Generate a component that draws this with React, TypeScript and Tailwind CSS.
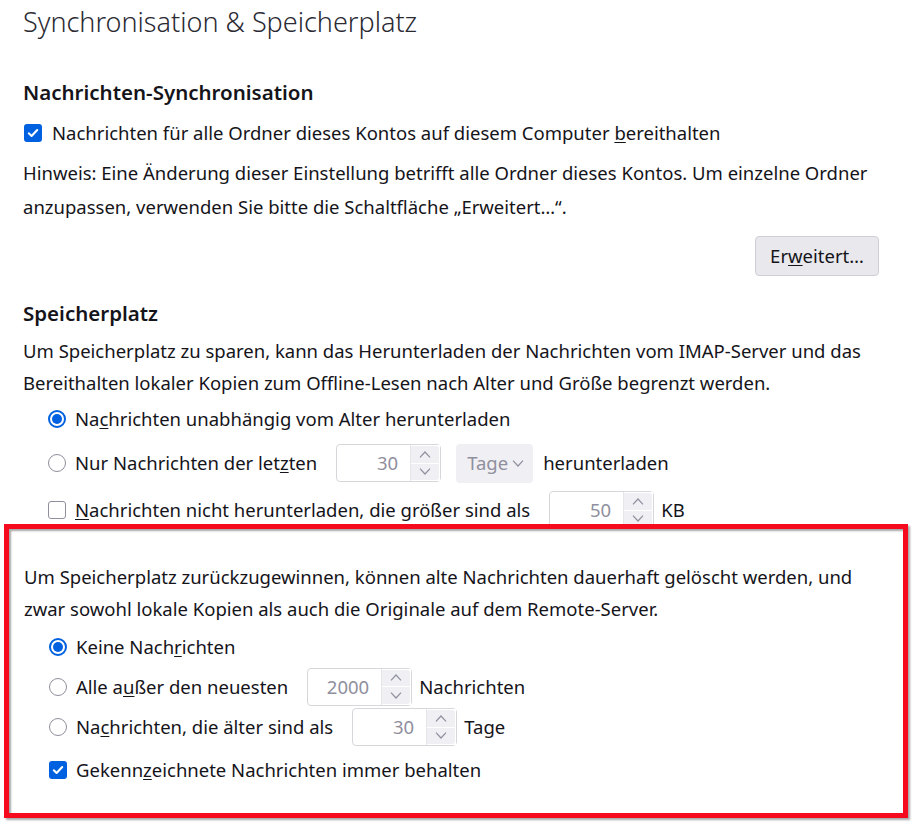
import React from "react";

const Check = ({ checked }: { checked: boolean }) =>
  checked ? (
    <span className="flex h-[18px] w-[18px] shrink-0 items-center justify-center rounded-[3px] bg-[#0061e0]">
      <svg viewBox="0 0 16 16" className="h-[14px] w-[14px]" fill="none" stroke="white" strokeWidth="2.4" strokeLinecap="round" strokeLinejoin="round">
        <path d="M3.2 8.4 6.4 11.4 12.8 4.6" />
      </svg>
    </span>
  ) : (
    <span className="h-[18px] w-[18px] shrink-0 rounded-[3px] border border-[#8f8f9d] bg-white" />
  );

const Radio = ({ checked }: { checked: boolean }) =>
  checked ? (
    <span className="flex h-[18px] w-[18px] shrink-0 items-center justify-center rounded-full border-2 border-[#0061e0] bg-white">
      <span className="h-[10px] w-[10px] rounded-full bg-[#0061e0]" />
    </span>
  ) : (
    <span className="h-[18px] w-[18px] shrink-0 rounded-full border border-[#8f8f9d] bg-white" />
  );

const Chevron = ({ up }: { up?: boolean }) => (
  <svg viewBox="0 0 12 7" className="h-[7px] w-[12px]" fill="none" stroke="#8f8f9d" strokeWidth="1.2">
    <path d={up ? "M1 6.4 6 1 11 6.4" : "M1 0.6 6 6 11 0.6"} />
  </svg>
);

const Spin = ({ value }: { value: string }) => (
  <span className="ml-[19px] mr-[7px] flex h-[38px] w-[105px] shrink-0 items-stretch rounded-[4px] border border-[#d7d7db] bg-white">
    <span className="flex flex-1 items-center justify-end pr-[12px] text-[#8f8f9d]">{value}</span>
    <span className="flex w-[30px] flex-col gap-[1px] border-l border-[#e6e6ea] bg-white py-[1px] pr-[1px]">
      <span className="flex flex-1 items-center justify-center rounded-tr-[3px] bg-[#f0f0f4]">
        <Chevron up />
      </span>
      <span className="flex flex-1 items-center justify-center rounded-br-[3px] bg-[#f0f0f4]">
        <Chevron />
      </span>
    </span>
  </span>
);

const Row = ({ children, h }: { children: React.ReactNode; h: string }) => (
  <div className={`flex items-center pl-[25px] ${h}`}>{children}</div>
);

export default function App() {
  return (
    <div
      className="h-[826px] w-[912px] overflow-hidden bg-white pl-[23px] text-[18.5px] text-[#15141a]"
      style={{ fontFamily: '"Noto Sans", "Open Sans", sans-serif' }}
    >
      <h1 className="text-[27px] font-light leading-[44px] text-[#2b2a33]">Synchronisation &amp; Speicherplatz</h1>

      <h2 className="mt-[34px] text-[20.5px] font-semibold leading-[28px]">Nachrichten-Synchronisation</h2>
      <div className="mt-[11px] flex h-[32px] items-center gap-[10px] pl-[1px]">
        <Check checked />
        <span>
          Nachrichten für alle Ordner dieses Kontos auf diesem Computer <u className="underline-offset-2">b</u>ereithalten
        </span>
      </div>
      <p className="mt-[7px] w-[870px] leading-[34px]">
        Hinweis: Eine Änderung dieser Einstellung betrifft alle Ordner dieses Kontos. Um einzelne Ordner
        <br />
        anzupassen, verwenden Sie bitte die Schaltfläche „Erweitert…“.
      </p>
      <div className="mt-[12px] flex w-[856px] justify-end">
        <button className="h-[40px] w-[124px] rounded-[4px] border border-[#cfcfd8] bg-[#e9e9ed] text-[18.5px] text-[#15141a]">
          Er<u className="underline-offset-2">w</u>eitert…
        </button>
      </div>

      <h2 className="mt-[23px] text-[20.5px] font-semibold leading-[28px]">Speicherplatz</h2>
      <p className="mt-[8px] w-[870px] leading-[32px]">
        Um Speicherplatz zu sparen, kann das Herunterladen der Nachrichten vom IMAP-Server und das
        <br />
        Bereithalten lokaler Kopien zum Offline-Lesen nach Alter und Größe begrenzt werden.
      </p>
      <Row h="h-[40px]">
        <Radio checked />
        <span className="ml-[9px]">
          Na<u className="underline-offset-2">c</u>hrichten unabhängig vom Alter herunterladen
        </span>
      </Row>
      <Row h="h-[44px] mt-[2px]">
        <Radio checked={false} />
        <span className="ml-[9px]">
          Nur Nachrichten der let<u className="underline-offset-2">z</u>ten
        </span>
        <Spin value="30" />
        <span className="ml-[8px] flex h-[39px] w-[77px] items-center gap-[4px] rounded-[4px] bg-[#f0f0f4] pl-[11px] text-[#8f8f9d]">
          Tage
          <Chevron />
        </span>
        <span className="ml-[10px]">herunterladen</span>
      </Row>
      <Row h="h-[40px] mt-[5px]">
        <Check checked={false} />
        <span className="ml-[9px]">
          <u className="underline-offset-2">N</u>achrichten nicht herunterladen, die größer sind als
        </span>
        <Spin value="50" />
        <span>KB</span>
      </Row>

      <section className="relative -ml-[19px] -mt-[6px] h-[294px] w-[904px] border-[5px] border-[#f50a1e] pl-[15px] pt-[32px] shadow-[2px_2px_2px_rgba(0,0,0,0.35),inset_2px_2px_2px_rgba(0,0,0,0.35)]">
        <p className="w-[870px] leading-[32px]">
          Um Speicherplatz zurückzugewinnen, können alte Nachrichten dauerhaft gelöscht werden, und
          <br />
          zwar sowohl lokale Kopien als auch die Originale auf dem Remote-Server.
        </p>
        <Row h="h-[40px] mt-[2px]">
          <Radio checked />
          <span className="ml-[9px]">
            Keine Nach<u className="underline-offset-2">r</u>ichten
          </span>
        </Row>
        <Row h="h-[39px]">
          <Radio checked={false} />
          <span className="ml-[9px]">
            Alle a<u className="underline-offset-2">u</u>ßer den neuesten
          </span>
          <Spin value="2000" />
          <span>Nachrichten</span>
        </Row>
        <Row h="h-[42px]">
          <Radio checked={false} />
          <span className="ml-[9px]">
            Na<u className="underline-offset-2">c</u>hrichten, die älter sind als
          </span>
          <Spin value="30" />
          <span>Tage</span>
        </Row>
        <Row h="h-[44px]">
          <Check checked />
          <span className="ml-[9px]">
            Gekenn<u className="underline-offset-2">z</u>eichnete Nachrichten immer behalten
          </span>
        </Row>
      </section>
    </div>
  );
}
